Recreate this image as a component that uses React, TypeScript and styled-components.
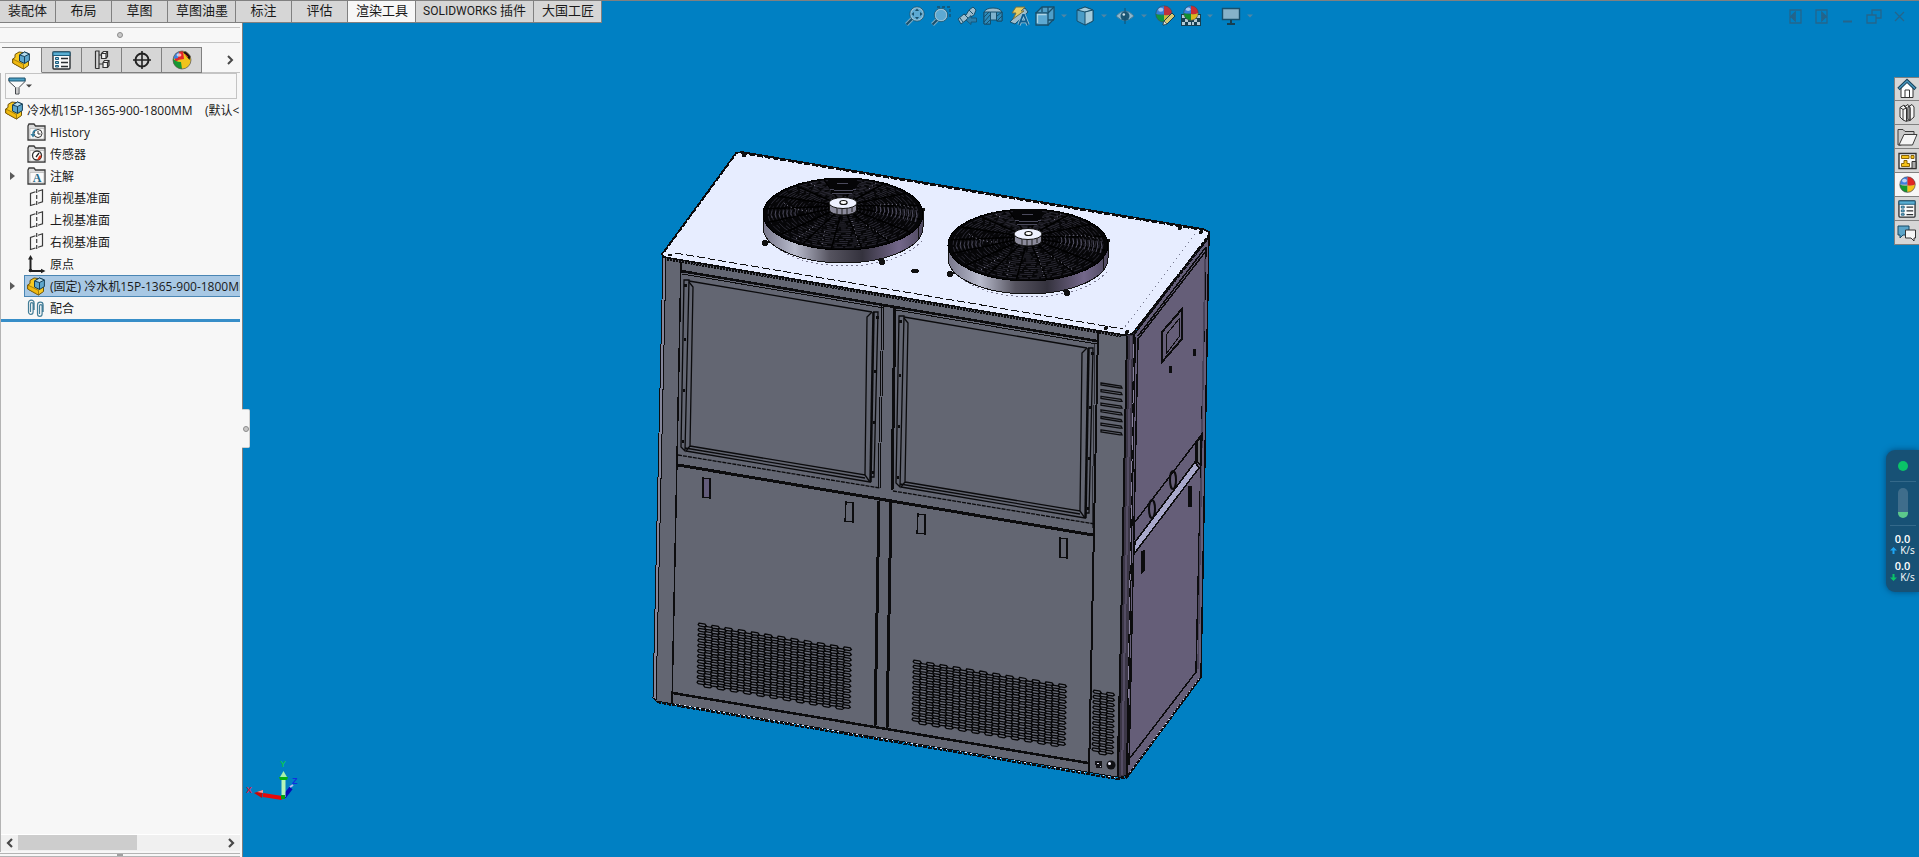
import React from 'react';
import styled, { createGlobalStyle } from 'styled-components';

const Global = createGlobalStyle`
  *, *::before, *::after { box-sizing: border-box; }
  body {
    margin: 0;
    background: #0080c3;
    font-family: "Open Sans", "Noto Sans CJK SC", sans-serif;
    color: #1a1a1a;
  }
  button { font: inherit; color: inherit; padding: 0; margin: 0; border: 0; background: none; }
  ul { list-style: none; margin: 0; padding: 0; }
  svg { display: block; flex: none; overflow: visible; }
`;

const EDGE = '#808080';

/* ---------- shell ---------- */
const Page = styled.div`
  position: relative;
  display: flex;
  flex-direction: column;
  height: 100vh;
  overflow: hidden;
  border-top: 1px solid ${EDGE};
`;
const Ribbon = styled.nav`
  display: flex;
  height: 22px;
  flex: none;
`;
const RibbonTab = styled.button<{ $active?: boolean; $wide?: boolean }>`
  padding: 0 7px 2px ${p => (p.$wide ? 8 : 7)}px;
  min-width: 56px;
  white-space: nowrap;
  font-size: 13px;
  line-height: 17px;
  background: ${p => (p.$active ? '#f7f7f7' : '#d6d6d6')};
  border-right: 1px solid ${EDGE};
  border-bottom: 1px solid ${EDGE};
`;
const Product = styled.span`
  font-family: Roboto, sans-serif;
  font-size: 12px;
`;
const Body = styled.div`
  display: flex;
  flex: 1;
  min-height: 0;
`;

/* ---------- manager panel ---------- */
const Panel = styled.aside`
  display: flex;
  flex-direction: column;
  width: 243px;
  flex: none;
  padding-right: 2px;
  background: #f7f7f7;
  border-right: 1px solid ${EDGE};
`;
const Grip = styled.div`
  display: flex;
  align-items: center;
  justify-content: center;
  height: 16px;
  margin-top: 4px;
  border-top: 1px solid #c4c4c4;
  border-bottom: 1px solid #c4c4c4;
`;
const GripDot = styled.i`
  width: 6px;
  height: 6px;
  border-radius: 50%;
  border: 1px solid #8c8c8c;
  background: #c8c8c8;
`;
const ManagerTabs = styled.div`
  display: flex;
  height: 26px;
  margin-top: 4px;
  padding-left: 2px;
  flex: none;
`;
const ManagerTab = styled.button<{ $active?: boolean }>`
  display: flex;
  align-items: center;
  justify-content: center;
  width: 40px;
  border-top: 1px solid ${EDGE};
  border-right: 1px solid ${EDGE};
  border-bottom: 1px solid ${p => (p.$active ? '#f7f7f7' : EDGE)};
  background: ${p => (p.$active ? '#f7f7f7' : '#d6d6d6')};
`;
const MoreTabs = styled.button`
  display: flex;
  flex: 1;
  align-items: center;
  justify-content: flex-end;
  padding-right: 6px;
  border-bottom: 1px solid #c4c4c4;
`;
const PanelContent = styled.div`
  display: flex;
  flex: 1;
  flex-direction: column;
  min-height: 0;
  border-left: 1px solid #b4b4b4;
`;
const Filter = styled.label`
  display: flex;
  align-items: center;
  height: 26px;
  margin: 0 3px 0 4px;
  padding-left: 2px;
  border: 1px solid #c4c4c4;
`;
const FilterInput = styled.input`
  flex: 1;
  min-width: 0;
  border: 0;
  outline: 0;
  background: transparent;
  font: inherit;
  font-size: 12px;
`;
const Tree = styled.ul`
  flex: none;
  border-bottom: 3px solid #378ec8;
  overflow: hidden;
`;
const TreeRow = styled.li<{ $root?: boolean }>`
  display: flex;
  align-items: center;
  height: 22px;
  padding-left: ${p => (p.$root ? 4 : 0)}px;
  font-size: 12px;
  white-space: pre;
`;
const Expander = styled.span`
  display: flex;
  width: 23px;
  padding-left: 9px;
  flex: none;
`;
const TreeItem = styled.span<{ $selected?: boolean }>`
  display: flex;
  flex: 1;
  align-items: center;
  gap: 4px;
  height: 22px;
  min-width: 0;
  overflow: hidden;
  padding-left: 2px;
  border: 1px solid ${p => (p.$selected ? '#4a86b4' : 'transparent')};
  border-right: 0;
  background: ${p => (p.$selected ? '#a8c8e4' : 'transparent')};
`;
const ScrollBar = styled.div`
  display: flex;
  height: 17px;
  margin-top: auto;
  margin-bottom: 1px;
  border-top: 1px solid #fff;
  background: #f0f0f0;
`;
const ScrollButton = styled.button`
  display: flex;
  align-items: center;
  justify-content: center;
  width: 17px;
`;
const ScrollTrack = styled.div`
  flex: 1;
`;
const ScrollThumb = styled.div`
  width: 58%;
  height: 15px;
  background: #cdcdcd;
`;
const BottomSplit = styled.div`
  height: 4px;
  margin-top: 1px;
  flex: none;
  border-top: 1px solid #b4b4b4;
  border-bottom: 1px solid #b4b4b4;
  display: flex;
  justify-content: center;
`;
const SplitDot = styled.i`
  width: 6px;
  height: 2px;
  background: #a0a0a0;
`;

/* ---------- graphics area ---------- */
const Viewport = styled.main`
  position: relative;
  display: flex;
  flex: 1;
  align-items: flex-start;
  justify-content: center;
  min-width: 0;
  padding: 116px 292px 0 0;
`;
const HeadsUp = styled.div`
  position: absolute;
  top: 2px;
  left: 240px;
  right: 0;
  display: flex;
  justify-content: center;
  gap: 6px;
  pointer-events: none;
`;
const ViewTool = styled.button<{ $arrow?: boolean }>`
  display: flex;
  align-items: center;
  width: ${p => (p.$arrow ? 8 : 20)}px;
  height: 26px;
`;
const WindowControls = styled.div`
  position: absolute;
  top: 8px;
  right: 12px;
  display: flex;
  gap: 12px;
`;
const TaskPane = styled.div`
  position: absolute;
  top: 76px;
  right: 0;
  display: flex;
  flex-direction: column;
  border: 1px solid ${EDGE};
  border-right: 0;
  border-bottom: 0;
`;
const TaskTab = styled.button<{ $active?: boolean }>`
  display: flex;
  align-items: center;
  justify-content: center;
  width: 24px;
  height: 24px;
  border-bottom: 1px solid ${EDGE};
  background: ${p => (p.$active ? '#f7f7f7' : '#d6d6d6')};
  &:first-child { height: 23px; }
`;
const PanelHandle = styled.button`
  position: absolute;
  left: -1px;
  top: 386px;
  display: flex;
  align-items: center;
  justify-content: center;
  width: 8px;
  height: 39px;
  background: #f7f7f7;
  border: 1px solid #d0d0d0;
  border-left: 0;
  border-radius: 0 2px 2px 0;
`;
const Triad = styled.svg`
  position: absolute;
  left: 0;
  bottom: 50px;
  font: bold 9px "Liberation Sans", sans-serif;
`;
const NetMeter = styled.section`
  position: absolute;
  right: 0;
  top: 449px;
  display: flex;
  flex-direction: column;
  align-items: center;
  width: 33px;
  height: 142px;
  padding-top: 11px;
  border-radius: 9px 0 0 9px;
  background: #175175;
  box-shadow: 0 0 6px rgba(0, 40, 80, 0.6);
  color: #fff;
`;
const StatusDot = styled.i`
  width: 10px;
  height: 10px;
  margin-bottom: 4px;
  border-radius: 50%;
  background: #0ac468;
`;
const MeterRule = styled.hr`
  width: 26px;
  height: 1px;
  margin: 6px 0;
  border: 0;
  background: #34698a;
`;
const Gauge = styled.div`
  width: 10px;
  height: 30px;
  margin-bottom: 1px;
  border-radius: 5px;
  background: linear-gradient(#3f6d8b 24px, #5cc88c 24px);
`;
const Speed = styled.div`
  margin-top: 1px;
  font-size: 11px;
  font-weight: 600;
  line-height: 12px;
`;
const Unit = styled.div`
  display: flex;
  align-items: center;
  gap: 3px;
  margin-bottom: 4px;
  font-size: 10px;
  line-height: 10px;
`;

/* ---------- icons ---------- */
const Ball = ({ size = 18 }: { size?: number }) => (
  <svg width={size} height={size} viewBox="0 0 18 18">
    <circle cx="9" cy="9.5" r="8.3" fill="#70706c" opacity=".5" />
    <path d="M9 9L9 .8A8.2 8.2 0 0 0 1 9z" fill="#3f7fe0" />
    <path d="M9 .8A8.2 8.2 0 0 1 17.2 9Q13 11 9 10z" fill="#e02525" />
    <path d="M.8 9Q5 11 9 10V17.2A8.2 8.2 0 0 1 .8 9z" fill="#129a2c" />
    <path d="M17.2 9A8.2 8.2 0 0 1 9 17.2V10Q13 11 17.2 9z" fill="#f2c21a" />
    <ellipse cx="5.8" cy="4.8" rx="2.6" ry="2" fill="#fff" opacity=".65" />
    <circle cx="9" cy="9" r="8.2" fill="none" stroke="#43454a" strokeWidth=".6" />
  </svg>
);
const AppearanceBall = () => (
  <svg width="20" height="20" viewBox="0 0 20 20">
    <circle cx="10" cy="10" r="9" fill="#f0c31c" />
    <path d="M3 6Q6 1 11 1L12 9Q7 9 3 12z" fill="#e3262a" />
    <path d="M1.200 8Q3 12 9 12L10 19A9 9 0 0 1 1.200 8z" fill="#179632" />
    <path d="M2 6A9 9 0 0 1 7 1.500L6 8 1.500 9z" fill="#3c82de" />
    <ellipse cx="7" cy="5" rx="2.500" ry="1.800" fill="#fff" opacity=".65" />
    <path d="M11 2L14 1.500 18.500 6 17.500 10z" fill="#1b1313" />
    <path d="M13 4L16 7" stroke="#c22" />
    <circle cx="10" cy="10" r="9" fill="none" stroke="#555" strokeWidth=".7" />
  </svg>
);
const Assembly = () => (
  <svg width="19" height="19" viewBox="0 0 19 19" strokeLinejoin="round">
    <path d="M.6 8L3 6.500V3.500L7 1 11 1.500 8 4V9.500L12 11.500 16.500 9.500V14.500L11.500 18 .6 12z" fill="#f8ca20" stroke="#6d5109" />
    <path d="M.8 8L6 10.500 11.500 13.500V18L.8 12z" fill="#f0b90f" stroke="#6d5109" strokeWidth=".6" />
    <path d="M7.500 4L12.500 1 17.400 3V9.500L12.500 12.500 7.500 10z" fill="#5ea6cc" stroke="#173f57" />
    <path d="M7.500 4L12.500 1 17.400 3 12.500 5.500z" fill="#b7dcec" stroke="#173f57" />
    <path d="M12.500 5.500v7" stroke="#173f57" />
  </svg>
);
const PropertyIcon = ({ size = 19 }: { size?: number }) => (
  <svg width={size} height={size} viewBox="0 0 19 19">
    <rect x="1" y="1" width="17" height="17" rx="1" fill="#fafafa" stroke="#2b2f33" strokeWidth="1.400" />
    <rect x="1" y="1" width="17" height="3.500" fill="#5aaed2" stroke="#1d5c7c" />
    <g fill="#8ecbe5" stroke="#1d5c7c"><path d="M3.500 6.500h3v2h-3zM3.500 10.500h3v2h-3zM3.500 14.500h3v1.500h-3z" /></g>
    <path d="M9 7.500h7M9 11.500h7M9 15.500h7" stroke="#2b2f33" strokeWidth="1.300" />
  </svg>
);
const ConfigIcon = () => (
  <svg width="16" height="20" viewBox="0 0 16 20" fill="none" stroke="#333" strokeWidth="1.200">
    <path d="M1.500 1v17.500M1.500 1h3.500v17.500H1.500M5 5h3M5 14h4" />
    <path d="M7.500 3.500L9.500 1.500H13.500V6.500L12 8.500H7.500zM7.500 3.500H12V8.500M12 3.500L13.500 1.500" fill="#f3f3f3" />
    <path d="M9 12.500L10.500 10.500H15V15.500L13.500 17.500H9zM9 12.500H13.500V17.500M13.500 12.500L15 10.500" fill="#f3f3f3" />
  </svg>
);
const Target = () => (
  <svg width="20" height="20" viewBox="0 0 20 20" fill="none" stroke="#222" strokeWidth="2">
    <circle cx="10" cy="10" r="6.500" />
    <path d="M10 1v18M1 10h18" strokeWidth="1.600" />
  </svg>
);
const Funnel = () => (
  <svg width="18" height="18" viewBox="0 0 18 18">
    <path d="M1 1.500h16v3l-6 6V17H7.500v-6.500L1 4.500z" fill="#fafafa" stroke="#414549" />
    <path d="M1 1h16v3H1z" fill="#4b9fc4" stroke="#1c5470" />
    <path d="M9 10v6" stroke="#999" />
  </svg>
);
const DropArrow = ({ color = '#444' }: { color?: string }) => (
  <svg width="6" height="4" viewBox="0 0 6 4"><path d="M0 .5h6L3 3.500z" fill={color} /></svg>
);
const Folder = ({ children }: { children: React.ReactNode }) => (
  <svg width="19" height="18" viewBox="0 0 19 18">
    <path d="M1 17V3l1-2h5l1.500 2H18v14z" fill="#dcdcdc" stroke="#3c3c3c" strokeWidth="1.300" />
    <path d="M3 5.500h14V16H3z" fill="#fafafa" stroke="#aaa" strokeWidth=".6" />
    {children}
  </svg>
);
const History = () => (
  <Folder>
    <circle cx="11" cy="10.500" r="4" fill="#fff" stroke="#333" />
    <path d="M11 8v3h2.500" fill="none" stroke="#333" />
    <path d="M9.500 7Q5.500 7.500 6 12" fill="none" stroke="#357e9f" strokeWidth="1.500" />
    <path d="M3.500 11h5L6 14.500z" fill="#357e9f" />
  </Folder>
);
const Sensor = () => (
  <Folder>
    <circle cx="10" cy="10.500" r="4.500" fill="#fff" stroke="#333" strokeWidth="1.300" />
    <path d="M10 15a4.500 4.500 0 0 0 4.300-4.500h-2z" fill="#df3b1b" />
    <path d="M9 12l3-4" stroke="#222" strokeWidth="1.300" />
  </Folder>
);
const Notes = () => (
  <Folder>
    <text x="10" y="15" textAnchor="middle" fontFamily="Liberation Serif, serif" fontWeight="bold" fontSize="12" fill="#24698a">A</text>
  </Folder>
);
const Plane = () => (
  <svg width="19" height="18" viewBox="0 0 19 18" fill="none" stroke="#3a3a3a" strokeWidth="1.200">
    <path d="M8.500 2.800L3.500 4.500v12l5-1.500M11 2.200l4.500-1.400v12L11 14.300" />
    <path d="M9.700 0v18" strokeDasharray="4 2" />
  </svg>
);
const Origin = () => (
  <svg width="19" height="18" viewBox="0 0 19 18" fill="#222" stroke="#222">
    <path d="M3.500 3v13H16" fill="none" strokeWidth="2" />
    <path d="M3.500 0l2.500 4.500H1zM18.500 16l-4.500 2.200v-4.500z" stroke="none" />
    <circle cx="3.500" cy="15.500" r="1.800" stroke="none" />
  </svg>
);
const Mates = () => (
  <svg width="19" height="18" viewBox="0 0 19 18" fill="none" stroke="#437d97" strokeWidth="1.200">
    <path d="M3.500 13V5a1.300 1.300 0 0 1 2.600 0v8a2.300 2.300 0 0 1-4.600 0V4a2.800 2.800 0 0 1 5.600 0v7" />
    <path d="M12.500 15V7a1.300 1.300 0 0 1 2.600 0v8a2.300 2.300 0 0 1-4.600 0V6a2.800 2.800 0 0 1 5.600 0v7" />
  </svg>
);
const Chevron = ({ left, bold }: { left?: boolean; bold?: boolean }) => (
  <svg width="7" height="10" viewBox="0 0 7 10" fill="none" stroke="#484848" strokeWidth={bold ? 2.2 : 2}>
    <path d={left ? 'M6 1L2 5l4 4' : 'M1 1l4 4-4 4'} />
  </svg>
);

const INK = '#174f6c';
const Glass = ({ area }: { area?: boolean }) => (
  <svg width="20" height="20" viewBox="0 0 20 20">
    {area && <path d="M6 1h13v12" fill="none" stroke={INK} strokeWidth="1.300" strokeDasharray="3 2" />}
    <path d="M8 12L1.500 18.500" stroke="#79aac4" strokeWidth="4" />
    <path d="M8 12L1.500 18.500" stroke={INK} strokeWidth="2" />
    <circle cx={area ? 10 : 12} cy={area ? 9 : 8} r={area ? 6 : 6.5} fill="#5da9d2" stroke="#9bc4d8" strokeWidth="1.500" />
    <circle cx={area ? 10 : 12} cy={area ? 9 : 8} r={area ? 6.7 : 7.2} fill="none" stroke={INK} strokeWidth=".8" />
    {!area && <path d="M12 2.500l2 2.500h-4zM12 13.500l2-2.500h-4zM6.500 8l2.500-2v4zM17.500 8l-2.500-2v4z" fill={INK} />}
  </svg>
);
const PreviousView = () => (
  <svg width="20" height="20" viewBox="0 0 20 20">
    <path d="M1 13L7 8l2 1 3-5 4-3 3 3-2 5-5 3-8 6z" fill="#9bbccd" stroke={INK} />
    <path d="M3 12l3 4M7 8l4 4M12 4l4 4" stroke={INK} />
    <path d="M9 14l5-4.500v2.500h5.500v4H14v2.500z" fill="#2b7fac" stroke={INK} strokeWidth=".8" />
  </svg>
);
const Section = () => (
  <svg width="20" height="20" viewBox="0 0 20 20" stroke={INK}>
    <path d="M1 6Q3 2 10 2T19 6V15H14V9Q11 11 7.500 9V18H1z" fill="#9bbccd" />
    <path d="M7.500 6h6v8h-6z" fill="#7fb2cd" />
    <path d="M1 6h6.500v12H1zM13.500 6H19v9h-5.500z" fill="#2c8abb" />
    <path d="M1 11l5-5M1 16l6-7M3 18l4-4M14 10l5-4M14 15l5-5" />
  </svg>
);
const Dynamic = () => (
  <svg width="20" height="20" viewBox="0 0 20 20">
    <path d="M1 16L12 4l4-2 3 4L6 18z" fill="#9bbccd" stroke={INK} />
    <path d="M7 1h9l-4 4h3L4 13l3-6H3z" fill="#e5cb62" stroke="#6f7046" />
    <path d="M10 19l4-10h1l4 10M11.500 15.500h6" fill="none" stroke="#9bc4d8" strokeWidth="3.400" />
    <path d="M10 19l4-10h1l4 10M11.500 15.500h6" fill="none" stroke="#0d5c8e" strokeWidth="1.800" />
  </svg>
);
const Orientation = () => (
  <svg width="20" height="20" viewBox="0 0 20 20" fill="none" stroke={INK} strokeWidth="1.300">
    <path d="M1 7l6-6h12v12l-6 6z" fill="#4f9fc9" />
    <path d="M7 1v5M13 7l6-6M13 14h6M13 1v5" />
    <path d="M1 7h12v12H1z" fill="#5da9d2" />
    <path d="M2.500 17V8.500h9" stroke="#b0d4e4" />
  </svg>
);
const DisplayStyle = () => (
  <svg width="20" height="20" viewBox="0 0 20 20" stroke={INK} strokeLinejoin="round">
    <path d="M2 4l8-3 8 3v11l-8 4-8-4z" fill="#4a9cc7" />
    <path d="M2 4l8 2 8-2-8-3z" fill="#9fcbde" />
    <path d="M10 6v13l8-4V4z" fill="#a3cbdc" />
  </svg>
);
const Eye = () => (
  <svg width="20" height="20" viewBox="0 0 20 20">
    <path d="M1 10Q10 0 19 10 10 19 1 10z" fill="#90b8cc" stroke="#3d7898" />
    <circle cx="10" cy="10" r="4.500" fill="#1c5876" />
    <path d="M10 2v16" stroke={INK} />
    <circle cx="8.800" cy="8.500" r="1.300" fill="#cde0e8" />
  </svg>
);
const EditAppearance = () => (
  <svg width="20" height="22" viewBox="0 0 20 22">
    <g opacity=".85"><Ball /></g>
    <path d="M8 20l1-4 8-8 3 3-8 8z" fill="#d6c873" stroke="#173f51" />
    <path d="M8 20l1-4 3 3z" fill="#e9e6d5" stroke="#173f51" strokeWidth=".6" />
  </svg>
);
const Scene = () => (
  <svg width="20" height="22" viewBox="0 0 20 22">
    <path d="M0 9h20v12H0z" fill="#173f51" />
    <path d="M1 10h3v3H1zM16 10h3v3h-3zM4 14h3v3H4zM13 14h3v3h-3zM1 17h3v3H1zM7 17h3v3H7zM11 17h2v3h-2zM16 17h3v3h-3z" fill="#b3cbd6" />
    <g opacity=".9" transform="translate(2 0)"><Ball size={16} /></g>
  </svg>
);
const Monitor = () => (
  <svg width="20" height="20" viewBox="0 0 20 20">
    <path d="M1.500 2.500h17v11h-17z" fill="#86b2c9" stroke={INK} strokeWidth="1.400" />
    <path d="M10 14v4M6 18h8" stroke="#173f51" strokeWidth="2" />
  </svg>
);

const House = () => (
  <svg width="20" height="20" viewBox="0 0 20 20">
    <path d="M4 9v9.500h12V9l-6-6z" fill="#fff" stroke="#333" />
    <path d="M8 18v-7h4.500v7" fill="#fff" stroke="#333" />
    <path d="M1.500 10L10 1.800 18.500 10" fill="none" stroke="#173f57" strokeWidth="3.400" />
    <path d="M2 9.500L10 2l8 7.500" fill="none" stroke="#4997be" strokeWidth="1.500" />
  </svg>
);
const Library = () => (
  <svg width="16" height="20" viewBox="0 0 16 20" fill="#f5f5f5" stroke="#333" strokeLinejoin="round">
    <path d="M9 4l4-2.500L15 4v10l-4 3.500L9 16zM5 4l4-2.500L11 4v13.500L8 18 5 16z" />
    <path d="M1 4.500l4-2.500L7.500 5v13.500L4 17 1 14z" />
    <path d="M1 4.500l3 2V17M4 6.500L7.500 5M5 3l3 2.500V18M9 3l2 2.500v12" fill="none" />
  </svg>
);
const OpenFolder = () => (
  <svg width="21" height="18" viewBox="0 0 21 18">
    <path d="M1 17V1.500h5l2 2h9V8L4 17z" fill="#c9c9c9" stroke="#3b3b3b" />
    <path d="M2 17L7 6.500h13L15.500 17z" fill="#f5f5f5" stroke="#3b3b3b" />
  </svg>
);
const ViewPalette = () => (
  <svg width="19" height="18" viewBox="0 0 19 18">
    <path d="M1 1.500h17v15H1z" fill="#fafafa" stroke="#333" strokeWidth="1.400" />
    <path d="M3.500 3.500h7.500v3H3.500zM13 3.500h3v3h-3zM6 8.500h3v3h2.500v3h-8v-3H6z" fill="#f6c31a" stroke="#8a6508" />
    <path d="M14 9.500h4v7h-4z" fill="#aaa" stroke="#333" />
  </svg>
);
const Forum = () => (
  <svg width="20" height="18" viewBox="0 0 20 18">
    <path d="M1 2h11v9H6l-3 3v-3H1z" fill="#5ba4c8" stroke="#174b67" />
    <path d="M8.500 6h10v8H17v3l-3-3H8.500z" fill="#f5f5f5" stroke="#333" />
  </svg>
);

/* ---------- chiller model ---------- */
const rings = Array.from({ length: 17 }, (_, i) => 0.2 + i * 0.046);
const spokes = Array.from({ length: 16 }, (_, i) => (i * Math.PI) / 8 + 0.15);

const Fan = () => (
  <g>
    <path d="M768 240Q790 266 846 267Q900 266 924 240" fill="none" stroke="#77758c" strokeDasharray="2 3" />
    <path d="M766 243l9 -1M881 263l-4 -4" stroke="#111" strokeWidth="2" />
    <circle cx="765" cy="244" r="3" fill="#111" />
    <circle cx="882" cy="263" r="3" fill="#111" />
    <path d="M763 216V228A80 36 0 0 0 923 228V212z" fill="url(#band)" stroke="#111" />
    <path d="M918 226v15" stroke="#111" />
    <circle cx="923" cy="211" r="2" fill="#111" />
    <ellipse cx="843" cy="215" rx="80" ry="36" fill="#060608" stroke="#000" />
    <g fill="none" stroke="#3b3947" strokeWidth=".7" shapeRendering="auto">
      {rings.map((k, i) => (
        <ellipse key={k} cx="843" cy={209 + k * 6} rx={80 * k} ry={36 * k} strokeDasharray={`${5 + (i % 3) * 4} ${2 + (i % 2) * 3}`} />
      ))}
    </g>
    <g stroke="#000" strokeWidth="1.500" shapeRendering="auto">
      {spokes.map(a => (
        <path key={a} d={`M843 207L${843 + 78 * Math.cos(a)} ${215 + 35 * Math.sin(a)}`} />
      ))}
    </g>
    <g fill="none" stroke="#77748f" strokeWidth=".8" shapeRendering="auto">
      {Array.from({ length: 11 }, (_, i) => (
        <path key={i} d={`M${876 + i * 4} ${207 + i * 0.4}q2 5 -1 ${7 + i * 0.5}`} opacity={0.8} />
      ))}
      {Array.from({ length: 7 }, (_, i) => (
        <path key={i} d={`M${772 + i * 4} ${212 - i * 0.3}q-2 4 0 7`} opacity={0.6} />
      ))}
    </g>
    <g fill="none" stroke="#b4b1cc" strokeWidth=".8" strokeDasharray="1 3" shapeRendering="auto">
      <path d="M784 204q10 8 28 8M869 190l10 -9M815 187l-9 -6M796 240l20 -14M866 226l22 14M852 222l7 24M822 245l3 -14M880 206q16 -2 36 3" />
    </g>
    <path d="M830 179h24l5 5-7 11h-18l-7-11z" fill="#050507" />
    <path d="M837 184h11M830 190q13 4 26 0M832 194h20" fill="none" stroke="#5d5b72" strokeWidth=".8" />
    <g shapeRendering="auto">
      <path d="M829.500 205v6a13.500 5 0 0 0 27 0v-6z" fill="#8c8b9c" stroke="#111" />
      <path d="M837 208v7M842 209v7M847 208v7M852 207v6" stroke="#222" />
      <ellipse cx="843" cy="204" rx="14" ry="5.500" fill="#eef1ff" stroke="#111" />
      <ellipse cx="843.500" cy="203.500" rx="3.600" ry="2" fill="#fff" stroke="#111" strokeWidth="1.200" />
    </g>
  </g>
);

const CoilPanel = () => (
  <g fill="none" stroke="#0a0a0c" strokeWidth="1.300" shapeRendering="auto">
    <path d="M684 281h5l-4 171 -4 -4z" />
    <path d="M689 282L872 313M689 283l4 5 -3 159 -4 5M690 447L865 476 867 318l5 -5" />
    <path d="M686 452L870 483l-5 -7M685 449L865 479" />
    <path d="M873.500 313L870.500 483" strokeWidth="2.500" />
    <path d="M873 313h5l-4 165h-4" />
    <path d="M678 456L880 489" strokeDasharray="4 1" />
    <g fill="#0c0c0e" stroke="none"><path d="M684 285h3v3h-3zM684 339h2v3h-2zM683 390h2v3h-2zM682 441h2v3h-2zM876 317h3v3h-3zM874 371h2v3h-2zM873 422h2v3h-2zM872 472h2v3h-2z" /></g>
  </g>
);

const Mesh = ({ x, y, cols, rows }: { x: number; y: number; cols: number; rows: number }) => (
  <g fill="#6c6f7b" stroke="#050506" strokeWidth="1.300" shapeRendering="auto">
    {Array.from({ length: cols * rows }, (_, n) => {
      const c = n % cols;
      const r = Math.floor(n / cols);
      const px = x + c * 6.6 - r * 0.1;
      const py = y + c * 1.08 + r * 5.25 + (c % 2 ? 2.2 : 0);
      return <path key={n} d={`M${px} ${py - 0.8}l6 1 1.200 1.600-1.600 1-5.200-.8-1.200-1.400z`} />;
    })}
  </g>
);

const Chiller = () => (
  <svg width="590" height="650" viewBox="640 140 590 650" shapeRendering="crispEdges" role="img" aria-label="冷水机">
    <defs>
      <linearGradient id="band">
        <stop offset="0" stopColor="#77768a" />
        <stop offset=".2" stopColor="#b9bccd" />
        <stop offset=".42" stopColor="#55535f" />
        <stop offset=".62" stopColor="#34323d" />
        <stop offset=".85" stopColor="#73678a" />
        <stop offset="1" stopColor="#4e485e" />
      </linearGradient>
    </defs>

    <path d="M663 257L653 699 657 702 667 258z" fill="#85869a" stroke="#0c0c0e" />
    <path d="M666 258L1128 336 1117 778 656 702z" fill="#636672" stroke="#0c0c0e" />
    <path d="M1127 336L1139 331 1130 775 1118 779z" fill="#3c3747" stroke="#0c0c0e" />
    <path d="M1134 336L1209 234 1201 678 1127 778z" fill="#655e78" stroke="#0c0c0e" strokeWidth="1.500" />
    <path d="M1131 337L1122 776" stroke="#544d64" strokeWidth="2" />
    <path d="M1135 338L1127 772" stroke="#0c0c0e" strokeWidth="2" />
    <path d="M1134 345L1128 700" stroke="#8a839e" strokeDasharray="14 9" />

    <path d="M736 154L742 153 1203 230 1209 233 1209 237 1132 335 1124 336 664 258 662 255z" fill="#e7edff" stroke="#0c0c0e" strokeWidth="1.500" />
    <path d="M741 154L1203 231M664 253L735 156" fill="none" stroke="#0c0c0e" strokeDasharray="6 2" strokeWidth="2" />
    <path d="M675 254L1123 330" stroke="#0c0c0e" strokeDasharray="8 3" fill="none" />
    <path d="M1125 328L1195 235" stroke="#777a90" strokeDasharray="2 3" />
    <path d="M667 260L1122 337" stroke="#0c0c0e" strokeWidth="3" strokeDasharray="2 1" />
    <path d="M1134 334L1209 237" stroke="#0c0c0e" strokeWidth="3" strokeDasharray="4 1" />
    <g fill="#111">
      <ellipse cx="744" cy="156" rx="2.500" ry="2" /><ellipse cx="670" cy="256" rx="2.500" ry="1.500" />
      <ellipse cx="915" cy="272" rx="4" ry="2" /><circle cx="1106" cy="329" r="2" />
      <circle cx="1180" cy="229" r="2" /><circle cx="1201" cy="233" r="2" /><circle cx="1127" cy="333" r="2" />
    </g>
    <Fan />
    <g transform="translate(185 31)"><Fan /></g>

    <g fill="none" stroke="#0c0c0e">
      <path d="M681 263L672 704" strokeWidth="1.500" />
      <path d="M681 272L1097 342" strokeWidth="2.500" />
      <path d="M682 275L884 309M896 311L1097 345" />
      <path d="M884 306L880 490M882 306L878 490" />
      <path d="M895 308L892 491" strokeWidth="3" />
      <path d="M678 466L1093 536" strokeWidth="3" />
      <path d="M879 502L875 727" strokeWidth="3" />
      <path d="M891 503L887 729" strokeWidth="3" />
      <path d="M673 694L1088 764" strokeWidth="2.500" />
      <path d="M1098 332L1089 775" strokeWidth="2" />
      <path d="M1095 345L1092 530" stroke="#2b2c33" />
      <path d="M1127 337L1118 778" strokeWidth="2" />
    </g>
    <CoilPanel />
    <g transform="translate(215 36)"><CoilPanel /></g>

    <g fill="none" stroke="#0c0c0e" strokeWidth="1.300">
      <path d="M703 479l7 1v19l-7-1z" fill="#635c7b" />
      <path d="M846 503l7 1v19l-8-1zM918 515l7 1v19l-8-1zM1060 539l7 1v19l-7-1z" />
    </g>

    <g fill="none" stroke="#0c0c0e" strokeWidth="1.300" shapeRendering="auto">
      {Array.from({ length: 8 }, (_, i) => (
        <path key={i} d={`M1101 ${384 + i * 6.7}l20 3 1 2h-2l-19-3z`} />
      ))}
    </g>
    <Mesh x={699} y={625} cols={23} rows={12} />
    <Mesh x={914} y={662} cols={23} rows={12} />
    <Mesh x={1094} y={692} cols={3} rows={12} />
    <path d="M1095 762h7v7h-6z" fill="#15151a" />
    <path d="M1097 764h2M1100 767h1" stroke="#dde" />
    <g shapeRendering="auto">
      <circle cx="1111" cy="766" r="4.500" fill="#101014" />
      <circle cx="1109.500" cy="764.500" r="1.500" fill="#eef" />
    </g>

    <g fill="none" stroke="#0c0c0e" strokeWidth="1.500">
      <path d="M1138 340L1206 252M1138 337L1206 248" />
      <path d="M1206 248L1196 673 1130 759" />
      <path d="M1138 340L1129 766" />
      <path d="M1205 260L1198 670" stroke="#4a445a" />
      <path d="M1162 333l20-23v30l-20 23z" strokeWidth="2" />
      <path d="M1166 336l13-16v18l-13 17z" strokeWidth="1" />
      <path d="M1170 368h1v5h-1zM1194 351h1v5h-1z" />
      <path d="M1135 523L1202 435 1201 467M1196 443v20" />
      <path d="M1197 443l4-5v28l-4-3z" fill="#6b6d76" />
      <g shapeRendering="auto">
        <ellipse cx="1152" cy="510" rx="3" ry="9" strokeWidth="2" />
        <ellipse cx="1173" cy="481" rx="3" ry="9" strokeWidth="2" />
      </g>
      <path d="M1135 543L1195 463 1199 469 1134 555z" fill="#a9a9cc" />
      <path d="M1189 488h2v19h-2zM1142 553l2-1v19l-2 2z" />
    </g>
    <path d="M674 705L1116 779" stroke="#e7edff" strokeDasharray="2 3" />
    <path d="M657 703L672 706 1117 780 1127 778 1201 678" fill="none" stroke="#0c0c0e" strokeWidth="2" strokeDasharray="4 1" />
    <path d="M1130 773L1199 680" stroke="#c9cbe0" strokeDasharray="1 4" />
  </svg>
);

/* ---------- content ---------- */
type Tab = { name: string; product?: string; active?: boolean; wide?: boolean };
const ribbonTabs: Tab[] = [
  { name: '装配体' },
  { name: '布局' },
  { name: '草图' },
  { name: '草图油墨', wide: true },
  { name: '标注' },
  { name: '评估' },
  { name: '渲染工具', wide: true, active: true },
  { name: '插件', product: 'SOLIDWORKS' },
  { name: '大国工匠', wide: true },
];

type Node = { label: string; icon: React.ReactNode; expandable?: boolean; selected?: boolean };
const nodes: Node[] = [
  { label: 'History', icon: <History /> },
  { label: '传感器', icon: <Sensor /> },
  { label: '注解', icon: <Notes />, expandable: true },
  { label: '前视基准面', icon: <Plane /> },
  { label: '上视基准面', icon: <Plane /> },
  { label: '右视基准面', icon: <Plane /> },
  { label: '原点', icon: <Origin /> },
  { label: '(固定) 冷水机15P-1365-900-1800MM', icon: <Assembly />, expandable: true, selected: true },
  { label: '配合', icon: <Mates /> },
];

const managerTabs: [string, React.ReactNode][] = [
  ['FeatureManager', <Assembly />],
  ['PropertyManager', <PropertyIcon />],
  ['ConfigurationManager', <ConfigIcon />],
  ['DimXpertManager', <Target />],
  ['DisplayManager', <AppearanceBall />],
];

const viewTools: [string, React.ReactNode, boolean][] = [
  ['整屏显示全图', <Glass />, false],
  ['局部放大', <Glass area />, false],
  ['上一视图', <PreviousView />, false],
  ['剖面视图', <Section />, false],
  ['动态注解视图', <Dynamic />, false],
  ['视图定向', <Orientation />, true],
  ['显示样式', <DisplayStyle />, true],
  ['隐藏/显示项目', <Eye />, true],
  ['编辑外观', <EditAppearance />, false],
  ['应用布景', <Scene />, true],
  ['视图设置', <Monitor />, true],
];

const taskTabs: [string, React.ReactNode][] = [
  ['资源', <House />],
  ['设计库', <Library />],
  ['文件探索器', <OpenFolder />],
  ['视图调色板', <ViewPalette />],
  ['外观、布景和贴图', <Ball size={17} />],
  ['自定义属性', <PropertyIcon size={18} />],
  ['论坛', <Forum />],
];

const windowGlyphs: [string, string][] = [
  ['上一个', 'M1 1h11v13H1zM2 7.500l4-4v8z'],
  ['下一个', 'M1 1h11v13H1zM11 7.500l-4-4v8z'],
  ['最小化', 'M2 12.500h9'],
  ['还原', 'M0 6h9v8H0zM5 6V1h9v8H9'],
  ['关闭', 'M2 3l9 9M11 3l-9 9'],
];

export default function App() {
  return (
    <Page>
      <Global />
      <Ribbon role="tablist">
        {ribbonTabs.map(t => (
          <RibbonTab key={t.name} role="tab" aria-selected={!!t.active} $active={t.active} $wide={t.wide}>
            {t.product && <Product>{t.product} </Product>}
            {t.name}
          </RibbonTab>
        ))}
      </Ribbon>
      <Body>
        <Panel>
          <Grip><GripDot /></Grip>
          <ManagerTabs role="tablist">
            {managerTabs.map(([name, icon], i) => (
              <ManagerTab key={name} role="tab" aria-label={name} $active={i === 0}>{icon}</ManagerTab>
            ))}
            <MoreTabs aria-label="更多"><Chevron /></MoreTabs>
          </ManagerTabs>
          <PanelContent>
            <Filter>
              <Funnel />
              <DropArrow />
              <FilterInput aria-label="过滤器" />
            </Filter>
            <Tree>
              <TreeRow $root>
                <Assembly />
                <TreeItem>冷水机15P-1365-900-1800MM    (默认&lt;</TreeItem>
              </TreeRow>
              {nodes.map(n => (
                <TreeRow key={n.label}>
                  <Expander>
                    {n.expandable && (
                      <svg width="5" height="8" viewBox="0 0 5 8"><path d="M0 0l5 4-5 4z" fill="#5a5a5a" /></svg>
                    )}
                  </Expander>
                  <TreeItem $selected={n.selected}>{n.icon}<span>{n.label}</span></TreeItem>
                </TreeRow>
              ))}
            </Tree>
            <ScrollBar>
              <ScrollButton aria-label="向左滚动"><Chevron left bold /></ScrollButton>
              <ScrollTrack><ScrollThumb /></ScrollTrack>
              <ScrollButton aria-label="向右滚动"><Chevron bold /></ScrollButton>
            </ScrollBar>
          </PanelContent>
          <BottomSplit><SplitDot /></BottomSplit>
        </Panel>
        <Viewport>
          <Chiller />
          <PanelHandle aria-label="折叠面板"><GripDot /></PanelHandle>
          <Triad width="60" height="52" viewBox="243 756 60 52">
            <text x="280" y="768" fill="#0bc05c">Y</text>
            <text x="246" y="794" fill="#c5264a">X</text>
            <text x="292" y="785" fill="#1030e0">Z</text>
            <path d="M284 798l7-9" stroke="#0808b8" strokeWidth="4" />
            <path d="M290 788l3-2" stroke="#b8b8f0" strokeWidth="2" />
            <path d="M282 799l-19-3" stroke="#e80808" strokeWidth="4" />
            <path d="M254 794l9-3-1 8z" fill="#c80808" />
            <path d="M257 793l6-2v3z" fill="#f0a0a0" />
            <path d="M283.500 798v-19" stroke="#b4f5b8" strokeWidth="4" />
            <path d="M283.500 772l4 7h-8z" fill="#a6f0aa" />
            <path d="M279 778h9l-1 3h-7z" fill="#04b010" />
            <path d="M281 796h4v4h-4z" fill="#04a010" />
          </Triad>
        </Viewport>
      </Body>

      <HeadsUp>
        {viewTools.map(([name, icon, arrow]) => (
          <React.Fragment key={name}>
            <ViewTool aria-label={name}>{icon}</ViewTool>
            {arrow && <ViewTool $arrow aria-label={`${name}选项`}><DropArrow color="#4f86a5" /></ViewTool>}
          </React.Fragment>
        ))}
      </HeadsUp>
      <WindowControls>
        {windowGlyphs.map(([name, d], i) => (
          <button key={name} aria-label={name}>
            <svg width="14" height="15" viewBox="0 0 14 15" fill="none" stroke="#24658c" strokeWidth={i === 2 ? 2 : 1.3}>
              <path d={d} />
              {i === 0 && <path d="M2 7.500l4-4v8z" fill="#24658c" />}
              {i === 1 && <path d="M11 7.500l-4-4v8z" fill="#24658c" />}
            </svg>
          </button>
        ))}
      </WindowControls>
      <TaskPane>
        {taskTabs.map(([name, icon], i) => (
          <TaskTab key={name} aria-label={name} $active={i === 4}>{icon}</TaskTab>
        ))}
      </TaskPane>
      <NetMeter>
        <StatusDot />
        <MeterRule />
        <Gauge />
        <MeterRule />
        <Speed>0.0</Speed>
        <Unit>
          <svg width="7" height="7" viewBox="0 0 7 7"><path d="M3.500 0L7 3.500H4.500V7h-2V3.500H0z" fill="#1da4f2" /></svg>K/s
        </Unit>
        <Speed>0.0</Speed>
        <Unit>
          <svg width="7" height="7" viewBox="0 0 7 7"><path d="M3.500 7L0 3.500h2.500V0h2v3.500H7z" fill="#0ac468" /></svg>K/s
        </Unit>
      </NetMeter>
    </Page>
  );
}
